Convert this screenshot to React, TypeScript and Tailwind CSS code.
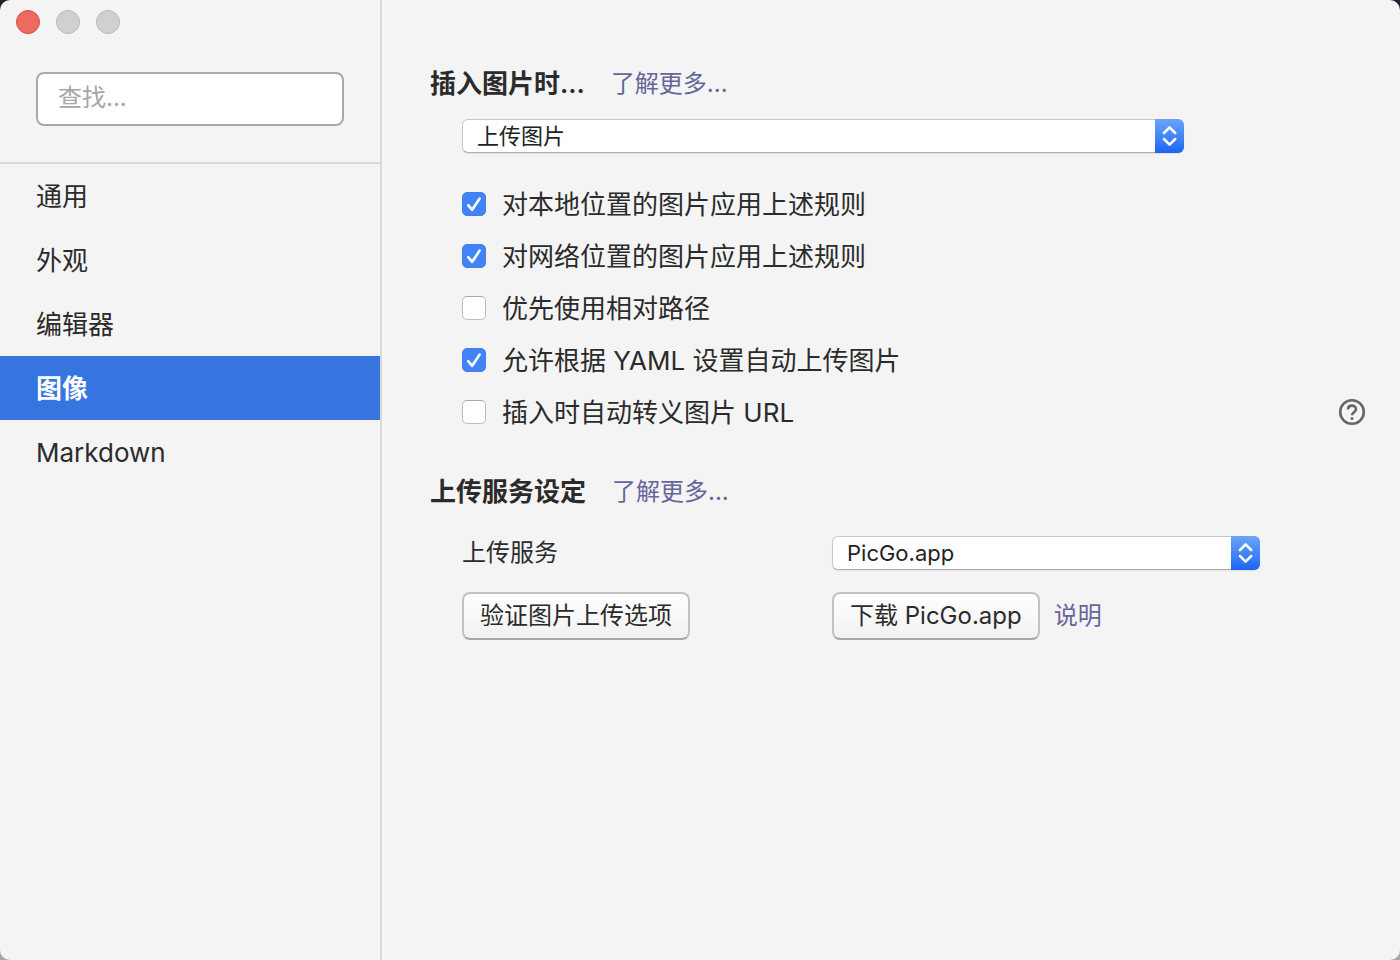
import { useState } from 'react';
import type { ReactNode } from 'react';

const NAV = [
  { id: 'general', label: '通用' },
  { id: 'appearance', label: '外观' },
  { id: 'editor', label: '编辑器' },
  { id: 'image', label: '图像' },
  { id: 'markdown', label: 'Markdown' },
];

const RULES = [
  { id: 'local', label: '对本地位置的图片应用上述规则', checked: true },
  { id: 'online', label: '对网络位置的图片应用上述规则', checked: true },
  { id: 'relative', label: '优先使用相对路径', checked: false },
  { id: 'yaml', label: '允许根据 YAML 设置自动上传图片', checked: true },
  { id: 'escape', label: '插入时自动转义图片 URL', checked: false, help: true },
];

function Select({ id, label, options }: { id: string; label?: string; options: string[] }) {
  return (
    <div className="relative">
      <select
        id={id}
        aria-label={label}
        className="block h-[34px] w-full appearance-none rounded-md border border-[#c8c8c8] border-b-[#b0b0b0] bg-white pr-10 pl-3.5 text-[22px] leading-8 text-[#222] shadow-[0_1px_1px_rgba(0,0,0,0.08)]"
      >
        {options.map(o => <option key={o}>{o}</option>)}
      </select>
      <span className="pointer-events-none absolute inset-y-0 right-0 flex w-[29px] items-center justify-center rounded-r-md bg-linear-to-b from-[#6ba4f8] to-[#1b64f3]">
        <svg className="h-5 w-4" viewBox="0 0 16 20" fill="none" stroke="#fff" strokeWidth="2.5" strokeLinecap="round" strokeLinejoin="round">
          <path d="M2 7 7.6 1.4 13.2 7M2 13 7.6 18.6 13.2 13" />
        </svg>
      </span>
    </div>
  );
}

function Checkbox({ id, label, defaultChecked }: { id: string; label: string; defaultChecked: boolean }) {
  return (
    <label htmlFor={id} className="flex items-center gap-4">
      <span className="relative size-6">
        <input
          id={id}
          type="checkbox"
          defaultChecked={defaultChecked}
          className="peer block size-6 appearance-none rounded-[5px] border border-[#bcbcbc] border-t-[#a8a8a8] bg-white checked:border-[#3f7ff0] checked:bg-[#4284f7]"
        />
        <svg className="pointer-events-none absolute inset-0 hidden size-6 peer-checked:block" viewBox="0 0 24 24" fill="none" stroke="#fff" strokeWidth="2.6" strokeLinecap="round" strokeLinejoin="round">
          <path d="M6.2 13.2 10.2 17.8 17.6 6.6" />
        </svg>
      </span>
      <span className="pt-0.5 text-[26px] leading-8">{label}</span>
    </label>
  );
}

function SectionTitle({ title }: { title: string }) {
  return (
    <div className="flex items-center gap-[26px]">
      <h2 className="text-[26px] leading-8 font-semibold">{title}</h2>
      <a href="#more" className="text-2xl text-[#66669a]">了解更多...</a>
    </div>
  );
}

function Button({ children }: { children: ReactNode }) {
  return (
    <button className="h-12 rounded-lg border-2 border-[#c2c2c2] border-b-[#a6a6a6] bg-linear-to-b from-white to-[#f1f1f1] px-4 text-2xl">
      {children}
    </button>
  );
}

export default function App() {
  const [active, setActive] = useState('image');

  return (
    <div className="min-h-screen bg-linear-to-b from-[#20222e] to-[#a8a8a8] font-['Inter','Noto_Sans_CJK_SC',sans-serif] text-[#2b2b2b]">
      <div className="flex min-h-screen overflow-hidden rounded-[10px] bg-[#f4f4f4]">
        <aside className="w-[382px] shrink-0 border-r-2 border-[#d9d9d9]">
          <div className="flex gap-4 px-4 pt-2.5">
            <button aria-label="关闭" className="size-6 rounded-full border border-[#dc4a42] bg-[#ed6a5e]" />
            <button aria-label="最小化" className="size-6 rounded-full border border-[#b9b9b9] bg-[#d0d0d0]" />
            <button aria-label="缩放" className="size-6 rounded-full border border-[#b9b9b9] bg-[#d0d0d0]" />
          </div>
          <div className="border-b-2 border-[#d9d9d9] px-9 pt-[38px] pb-9">
            <input
              type="search"
              aria-label="查找"
              placeholder="查找..."
              className="block h-[54px] w-full rounded-lg border-2 border-[#a9a9a9] bg-white px-5 pb-1 text-2xl placeholder:text-[#a6a6a6]"
            />
          </div>
          <nav>
            {NAV.map(n => (
              <a
                key={n.id}
                href={`#${n.id}`}
                onClick={() => setActive(n.id)}
                className={`flex h-16 items-center px-9 text-[26px] ${n.id === active ? 'bg-[#3674e0] font-semibold text-white' : ''}`}
              >
                {n.label}
              </a>
            ))}
          </nav>
        </aside>

        <main className="min-w-0 flex-1 pt-[68px] pr-8 pl-12">
          <section>
            <SectionTitle title="插入图片时..." />
            <div className="mt-[19px] ml-8 max-w-[722px]">
              <Select id="insert-action" label="插入图片时" options={['上传图片', '无特殊操作', '复制到指定路径']} />
            </div>
            <ul className="mt-[25px] ml-8">
              {RULES.map(r => (
                <li key={r.id} className="flex h-[52px] items-center justify-between">
                  <Checkbox id={r.id} label={r.label} defaultChecked={r.checked} />
                  {r.help && (
                    <button aria-label="帮助" className="text-[#666]">
                      <svg className="size-8" viewBox="0 0 32 32" fill="none" stroke="currentColor" strokeWidth="2.6">
                        <circle cx="16" cy="16" r="11.8" />
                        <path d="M12 13.4c0-2.3 1.7-3.8 4-3.8s4 1.5 4 3.6c0 3-4 3.1-4 6.1" />
                        <circle cx="16" cy="22.4" r="1.5" fill="currentColor" stroke="none" />
                      </svg>
                    </button>
                  )}
                </li>
              ))}
            </ul>
          </section>

          <section className="mt-[38px]">
            <SectionTitle title="上传服务设定" />
            <div className="mt-7 ml-8 grid grid-cols-[370px_1fr] items-center gap-y-[22px]">
              <label htmlFor="uploader" className="text-2xl">上传服务</label>
              <div className="max-w-[428px]">
                <Select id="uploader" options={['PicGo.app', 'iPic', 'uPic']} />
              </div>
              <div>
                <Button>验证图片上传选项</Button>
              </div>
              <div className="flex items-center gap-3.5">
                <Button>下载 PicGo.app</Button>
                <a href="#docs" className="text-2xl text-[#66669a]">说明</a>
              </div>
            </div>
          </section>
        </main>
      </div>
    </div>
  );
}
